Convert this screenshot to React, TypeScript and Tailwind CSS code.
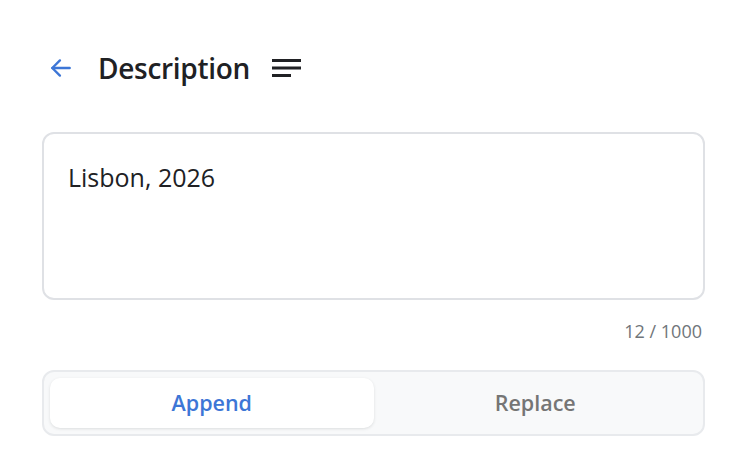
import React, { useState } from 'react';

const font = { fontFamily: '"Open Sans", Roboto, Arial, sans-serif' };

export default function App() {
  const [mode, setMode] = useState<'append' | 'replace'>('append');
  const text = 'Lisbon, 2026';

  return (
    <div className="w-[750px] h-[472px] bg-white pl-[42px] pr-[45px] pt-[44px]" style={font}>
      {/* header */}
      <div className="flex items-center h-[48px]">
        <button className="w-[34px] h-[48px] flex items-center justify-start ml-[6px] text-[#3d76d6]">
          <svg width="26" height="26" viewBox="0 0 24 24" fill="none" stroke="currentColor" strokeWidth="2.2" strokeLinecap="round" strokeLinejoin="round">
            <path d="M20 12H4" />
            <path d="M11 5l-7 7 7 7" />
          </svg>
        </button>
        <h1 className="ml-[16px] text-[28px] font-semibold text-[#202124] tracking-[-0.3px]">Description</h1>
        <svg className="ml-[21px]" width="32" height="24" viewBox="0 0 32 24" fill="#202124">
          <rect x="1" y="3" width="29" height="3" />
          <rect x="1" y="10.5" width="29" height="3" />
          <rect x="1" y="18" width="19" height="3" />
        </svg>
      </div>

      {/* text area */}
      <div className="mt-[40px] h-[168px] rounded-[12px] border-2 border-[#dfe1e5] px-[24px] pt-[28px]">
        <div className="text-[25px] text-[#202124] leading-[30px]">{text}</div>
      </div>
      <div className="mt-[20px] text-right pr-[3px] text-[18px] text-[#70757a] leading-[22px]">
        {text.length} / 1000
      </div>

      {/* segmented */}
      <div className="mt-[28px] h-[66px] rounded-[12px] border-2 border-[#e8eaed] bg-[#f8f9fa] p-[6px] flex">
        <button
          onClick={() => setMode('append')}
          className={`flex-1 rounded-[10px] text-[21.5px] font-semibold ${mode === 'append' ? 'bg-white text-[#3d76d6] shadow-[0_1px_3px_rgba(60,64,67,0.15)]' : 'text-[#757575]'}`}
        >
          Append
        </button>
        <button
          onClick={() => setMode('replace')}
          className={`flex-1 rounded-[10px] text-[21.5px] font-semibold ${mode === 'replace' ? 'bg-white text-[#3d76d6] shadow-[0_1px_3px_rgba(60,64,67,0.15)]' : 'text-[#757575]'}`}
        >
          Replace
        </button>
      </div>
    </div>
  );
}
